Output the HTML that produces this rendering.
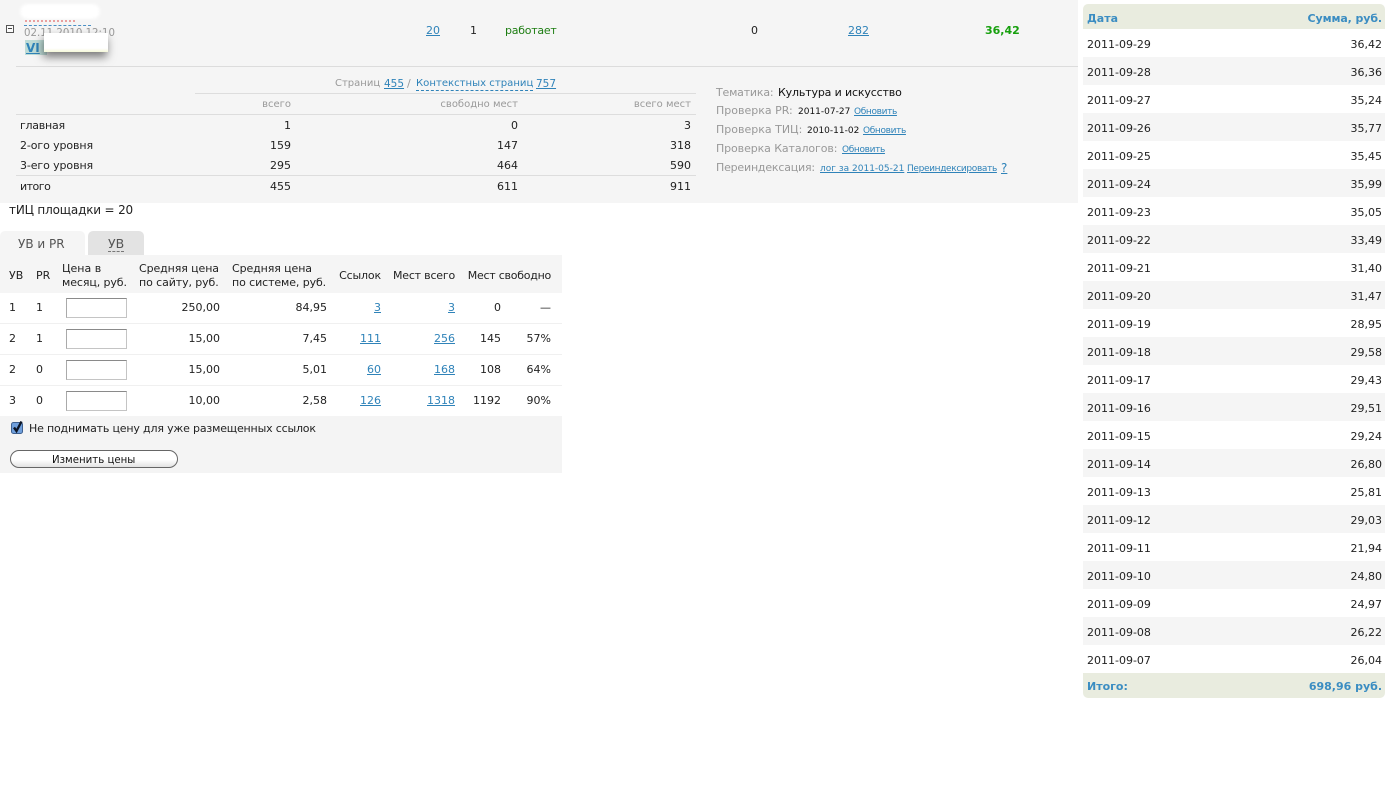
<!DOCTYPE html>
<html lang="ru"><head><meta charset="utf-8"><title>Площадка</title>
<style>
html,body{margin:0;padding:0;background:#fff}
body{width:1388px;height:800px;position:relative;overflow:hidden;font-family:"DejaVu Sans","Liberation Sans",sans-serif;font-size:11px;color:#222}
.t{position:absolute;white-space:nowrap;line-height:14px;margin-top:1px}
.b{position:absolute}
a{color:#2f83b9;text-decoration:underline}
.g{color:#999}
.s{font-size:9px}
.u{letter-spacing:-.35px}
.x{font-size:10px}
.i{position:absolute;left:66px;width:59px;height:18px;background:#fff;border:1px solid #c4c4c4;border-top-color:#8a8a8a;border-left-color:#aaa}
.h{font-weight:bold;color:#3b8dc2}
</style></head><body>
<div class="b" style="left:0;top:0;width:1078px;height:203px;background:#f5f5f5"></div>
<div class="b" style="left:16px;top:66px;width:1062px;height:1px;background:#dcdcdc"></div>
<div class="b" style="left:195px;top:93px;width:501px;height:1px;background:#ddd"></div>
<div class="b" style="left:16px;top:114px;width:680px;height:1px;background:#ddd"></div>
<div class="b" style="left:16px;top:175px;width:680px;height:1px;background:#ddd"></div>

<div class="b" style="left:20px;top:4px;width:80px;height:15px;background:#fff;border-radius:8px;filter:blur(1.5px)"></div>
<div class="b" style="left:25px;top:20px;width:50px;border-top:2px dotted #e9a0a0"></div>
<div class="b" style="left:24px;top:25px;width:67px;border-top:1px dashed #4a8fc4"></div>
<div class="b" style="left:6px;top:25px;width:6px;height:6px;border:1px solid #555;background:#fafafa"></div>
<div class="b" style="left:8px;top:28px;width:4px;height:1px;background:#444"></div>
<span class="t g" style="left:24px;top:26px;font-size:10.2px">02.11.2010 12:10</span>
<div class="b" style="left:25px;top:40px;width:22px;height:15px;background:#bddbd6"></div>
<a class="t" style="left:26px;top:40px;font-weight:bold;font-size:12px">VI</a>
<div class="b" style="left:44px;top:33px;width:64px;height:19px;background:linear-gradient(#fff 80%,#f5f8d8);box-shadow:-1px 5px 9px rgba(0,0,0,.5)"></div>

<a class="t" style="left:426px;top:23px">20</a>
<span class="t" style="left:470px;top:23px">1</span>
<span class="t" style="left:505px;top:23px;color:#1d7d12;letter-spacing:-.25px">работает</span>
<span class="t" style="left:751px;top:23px">0</span>
<a class="t" style="left:848px;top:23px">282</a>
<span class="t" style="left:985px;top:23px;font-weight:bold;color:#17a00e">36,42</span>

<span class="t g x" style="left:335px;top:76px">Страниц</span>
<a class="t" style="left:384px;top:76px;font-size:10.5px">455</a>
<span class="t g" style="left:407px;top:76px">/</span>
<a class="t" style="left:416px;top:76px;font-size:10.1px;text-decoration:none;border-bottom:1px dashed #2f83b9;line-height:13px">Контекстных страниц</a>
<a class="t" style="left:536px;top:76px;font-size:10.5px">757</a>
<span class="t g x" style="right:1097px;top:97px">всего</span>
<span class="t g x" style="right:870px;top:97px">свободно мест</span>
<span class="t g x" style="right:697px;top:97px">всего мест</span>

<span class="t" style="left:20px;top:118px;letter-spacing:-.25px">главная</span><span class="t" style="right:1097px;top:118px">1</span><span class="t" style="right:870px;top:118px">0</span><span class="t" style="right:697px;top:118px">3</span>
<span class="t" style="left:20px;top:138px;letter-spacing:-.1px">2-ого уровня</span><span class="t" style="right:1097px;top:138px">159</span><span class="t" style="right:870px;top:138px">147</span><span class="t" style="right:697px;top:138px">318</span>
<span class="t" style="left:20px;top:158px;letter-spacing:-.1px">3-его уровня</span><span class="t" style="right:1097px;top:158px">295</span><span class="t" style="right:870px;top:158px">464</span><span class="t" style="right:697px;top:158px">590</span>
<span class="t" style="left:20px;top:179px;letter-spacing:-.5px">итого</span><span class="t" style="right:1097px;top:179px">455</span><span class="t" style="right:870px;top:179px">611</span><span class="t" style="right:697px;top:179px">911</span>

<span class="t g" style="left:716px;top:85px;letter-spacing:-.2px">Тематика:</span><span class="t" style="left:778px;top:85px;color:#111;letter-spacing:-.15px">Культура и искусство</span>
<span class="t g" style="left:716px;top:103px">Проверка PR:</span><span class="t s" style="left:798px;top:104px;color:#111">2011-07-27</span><a class="t s u" style="left:854px;top:104px">Обновить</a>
<span class="t g" style="left:716px;top:122px">Проверка ТИЦ:</span><span class="t s" style="left:807px;top:123px;color:#111">2010-11-02</span><a class="t s u" style="left:863px;top:123px">Обновить</a>
<span class="t g" style="left:716px;top:141px;letter-spacing:-.1px">Проверка Каталогов:</span><a class="t s u" style="left:842px;top:142px">Обновить</a>
<span class="t g" style="left:716px;top:160px;letter-spacing:-.2px">Переиндексация:</span><a class="t s" style="left:820px;top:161px">лог за 2011-05-21</a><a class="t s u" style="left:907px;top:161px">Переиндексировать</a><a class="t" style="left:1001px;top:160px;font-size:12px">?</a>

<span class="t" style="left:9px;top:202px;font-size:12px;letter-spacing:-.17px">тИЦ площадки = 20</span>

<div class="b" style="left:0;top:231px;width:85px;height:24px;background:#f5f5f5;border-radius:5px 5px 0 0"></div>
<div class="b" style="left:88px;top:231px;width:56px;height:24px;background:#e3e3e3;border-radius:5px 5px 0 0"></div>
<span class="t" style="left:18px;top:236px;color:#555;font-size:12px">УВ и PR</span>
<span class="t" style="left:108px;top:236px;color:#555;font-size:12.5px;border-bottom:1px dashed #777;line-height:14px">УВ</span>

<div class="b" style="left:0;top:255px;width:562px;height:38px;background:#f5f5f5"></div>
<div class="b" style="left:0;top:323px;width:562px;height:1px;background:#f0f0f0"></div>
<div class="b" style="left:0;top:354px;width:562px;height:1px;background:#f0f0f0"></div>
<div class="b" style="left:0;top:385px;width:562px;height:1px;background:#f0f0f0"></div>
<div class="b" style="left:0;top:416px;width:562px;height:57px;background:#f4f4f4"></div>

<span class="t" style="left:9px;top:268px">УВ</span>
<span class="t" style="left:36px;top:268px">PR</span>
<span class="t" style="left:62px;top:261px">Цена в</span>
<span class="t" style="left:62px;top:275px;letter-spacing:-.1px">месяц, руб.</span>
<span class="t" style="left:139px;top:261px;letter-spacing:-.1px">Средняя цена</span>
<span class="t" style="left:139px;top:275px;letter-spacing:-.1px">по сайту, руб.</span>
<span class="t" style="left:232px;top:261px;letter-spacing:-.1px">Средняя цена</span>
<span class="t" style="left:232px;top:275px;letter-spacing:-.1px">по системе, руб.</span>
<span class="t" style="right:1007px;top:268px;letter-spacing:-.15px">Ссылок</span>
<span class="t" style="right:933px;top:268px;letter-spacing:-.2px">Мест всего</span>
<span class="t" style="right:837px;top:268px;letter-spacing:-.25px">Мест свободно</span>

<span class="t" style="left:9px;top:300px">1</span><span class="t" style="left:36px;top:300px">1</span><div class="i" style="top:298px"></div><span class="t" style="right:1168px;top:300px">250,00</span><span class="t" style="right:1061px;top:300px">84,95</span><a class="t" style="right:1007px;top:300px">3</a><a class="t" style="right:933px;top:300px">3</a><span class="t" style="right:887px;top:300px">0</span><span class="t" style="right:837px;top:300px">—</span>
<span class="t" style="left:9px;top:331px">2</span><span class="t" style="left:36px;top:331px">1</span><div class="i" style="top:329px"></div><span class="t" style="right:1168px;top:331px">15,00</span><span class="t" style="right:1061px;top:331px">7,45</span><a class="t" style="right:1007px;top:331px">111</a><a class="t" style="right:933px;top:331px">256</a><span class="t" style="right:887px;top:331px">145</span><span class="t" style="right:837px;top:331px">57%</span>
<span class="t" style="left:9px;top:362px">2</span><span class="t" style="left:36px;top:362px">0</span><div class="i" style="top:360px"></div><span class="t" style="right:1168px;top:362px">15,00</span><span class="t" style="right:1061px;top:362px">5,01</span><a class="t" style="right:1007px;top:362px">60</a><a class="t" style="right:933px;top:362px">168</a><span class="t" style="right:887px;top:362px">108</span><span class="t" style="right:837px;top:362px">64%</span>
<span class="t" style="left:9px;top:393px">3</span><span class="t" style="left:36px;top:393px">0</span><div class="i" style="top:391px"></div><span class="t" style="right:1168px;top:393px">10,00</span><span class="t" style="right:1061px;top:393px">2,58</span><a class="t" style="right:1007px;top:393px">126</a><a class="t" style="right:933px;top:393px">1318</a><span class="t" style="right:887px;top:393px">1192</span><span class="t" style="right:837px;top:393px">90%</span>

<svg class="b" style="left:10px;top:420px" width="15" height="15" viewBox="0 0 15 15"><rect x="1.5" y="2.5" width="11" height="11" rx="2" fill="#6f9fdc" stroke="#3d5f8f"/><path d="M4 7.5 L6.5 11 L11.5 1.5" fill="none" stroke="#0c1526" stroke-width="2.4"/></svg>
<span class="t" style="left:29px;top:421px;letter-spacing:-.18px">Не поднимать цену для уже размещенных ссылок</span>
<div class="b" style="left:10px;top:450px;width:166px;height:15.5px;border:1.5px solid #666;border-radius:9px;background:linear-gradient(#fff,#fff 55%,#e2e2e2)"></div>
<span class="t" style="left:52px;top:453px;font-size:10.2px;color:#111">Изменить цены</span>

<div class="b" style="left:1083px;top:4px;width:302px;height:694px;border-radius:5px;overflow:hidden;background:#fff">
<div class="b" style="left:0;top:0;width:302px;height:25px;background:#e9ecdf"></div>
<div class="b" style="left:0;top:53px;width:302px;height:28px;background:#f5f5f5"></div>
<div class="b" style="left:0;top:109px;width:302px;height:28px;background:#f5f5f5"></div>
<div class="b" style="left:0;top:165px;width:302px;height:28px;background:#f5f5f5"></div>
<div class="b" style="left:0;top:221px;width:302px;height:28px;background:#f5f5f5"></div>
<div class="b" style="left:0;top:277px;width:302px;height:28px;background:#f5f5f5"></div>
<div class="b" style="left:0;top:333px;width:302px;height:28px;background:#f5f5f5"></div>
<div class="b" style="left:0;top:389px;width:302px;height:28px;background:#f5f5f5"></div>
<div class="b" style="left:0;top:445px;width:302px;height:28px;background:#f5f5f5"></div>
<div class="b" style="left:0;top:501px;width:302px;height:28px;background:#f5f5f5"></div>
<div class="b" style="left:0;top:557px;width:302px;height:28px;background:#f5f5f5"></div>
<div class="b" style="left:0;top:613px;width:302px;height:28px;background:#f5f5f5"></div>
<div class="b" style="left:0;top:669px;width:302px;height:25px;background:#e9ecdf"></div>
</div>
<span class="t h" style="left:1087px;top:11px">Дата</span><span class="t h" style="right:6px;top:11px;letter-spacing:-.1px">Сумма, руб.</span>
<span class="t" style="left:1087px;top:37px">2011-09-29</span><span class="t" style="right:6px;top:37px">36,42</span>
<span class="t" style="left:1087px;top:65px">2011-09-28</span><span class="t" style="right:6px;top:65px">36,36</span>
<span class="t" style="left:1087px;top:93px">2011-09-27</span><span class="t" style="right:6px;top:93px">35,24</span>
<span class="t" style="left:1087px;top:121px">2011-09-26</span><span class="t" style="right:6px;top:121px">35,77</span>
<span class="t" style="left:1087px;top:149px">2011-09-25</span><span class="t" style="right:6px;top:149px">35,45</span>
<span class="t" style="left:1087px;top:177px">2011-09-24</span><span class="t" style="right:6px;top:177px">35,99</span>
<span class="t" style="left:1087px;top:205px">2011-09-23</span><span class="t" style="right:6px;top:205px">35,05</span>
<span class="t" style="left:1087px;top:233px">2011-09-22</span><span class="t" style="right:6px;top:233px">33,49</span>
<span class="t" style="left:1087px;top:261px">2011-09-21</span><span class="t" style="right:6px;top:261px">31,40</span>
<span class="t" style="left:1087px;top:289px">2011-09-20</span><span class="t" style="right:6px;top:289px">31,47</span>
<span class="t" style="left:1087px;top:317px">2011-09-19</span><span class="t" style="right:6px;top:317px">28,95</span>
<span class="t" style="left:1087px;top:345px">2011-09-18</span><span class="t" style="right:6px;top:345px">29,58</span>
<span class="t" style="left:1087px;top:373px">2011-09-17</span><span class="t" style="right:6px;top:373px">29,43</span>
<span class="t" style="left:1087px;top:401px">2011-09-16</span><span class="t" style="right:6px;top:401px">29,51</span>
<span class="t" style="left:1087px;top:429px">2011-09-15</span><span class="t" style="right:6px;top:429px">29,24</span>
<span class="t" style="left:1087px;top:457px">2011-09-14</span><span class="t" style="right:6px;top:457px">26,80</span>
<span class="t" style="left:1087px;top:485px">2011-09-13</span><span class="t" style="right:6px;top:485px">25,81</span>
<span class="t" style="left:1087px;top:513px">2011-09-12</span><span class="t" style="right:6px;top:513px">29,03</span>
<span class="t" style="left:1087px;top:541px">2011-09-11</span><span class="t" style="right:6px;top:541px">21,94</span>
<span class="t" style="left:1087px;top:569px">2011-09-10</span><span class="t" style="right:6px;top:569px">24,80</span>
<span class="t" style="left:1087px;top:597px">2011-09-09</span><span class="t" style="right:6px;top:597px">24,97</span>
<span class="t" style="left:1087px;top:625px">2011-09-08</span><span class="t" style="right:6px;top:625px">26,22</span>
<span class="t" style="left:1087px;top:653px">2011-09-07</span><span class="t" style="right:6px;top:653px">26,04</span>
<span class="t h" style="left:1087px;top:679px">Итого:</span><span class="t h" style="right:6px;top:679px">698,96 руб.</span>
</body></html>
